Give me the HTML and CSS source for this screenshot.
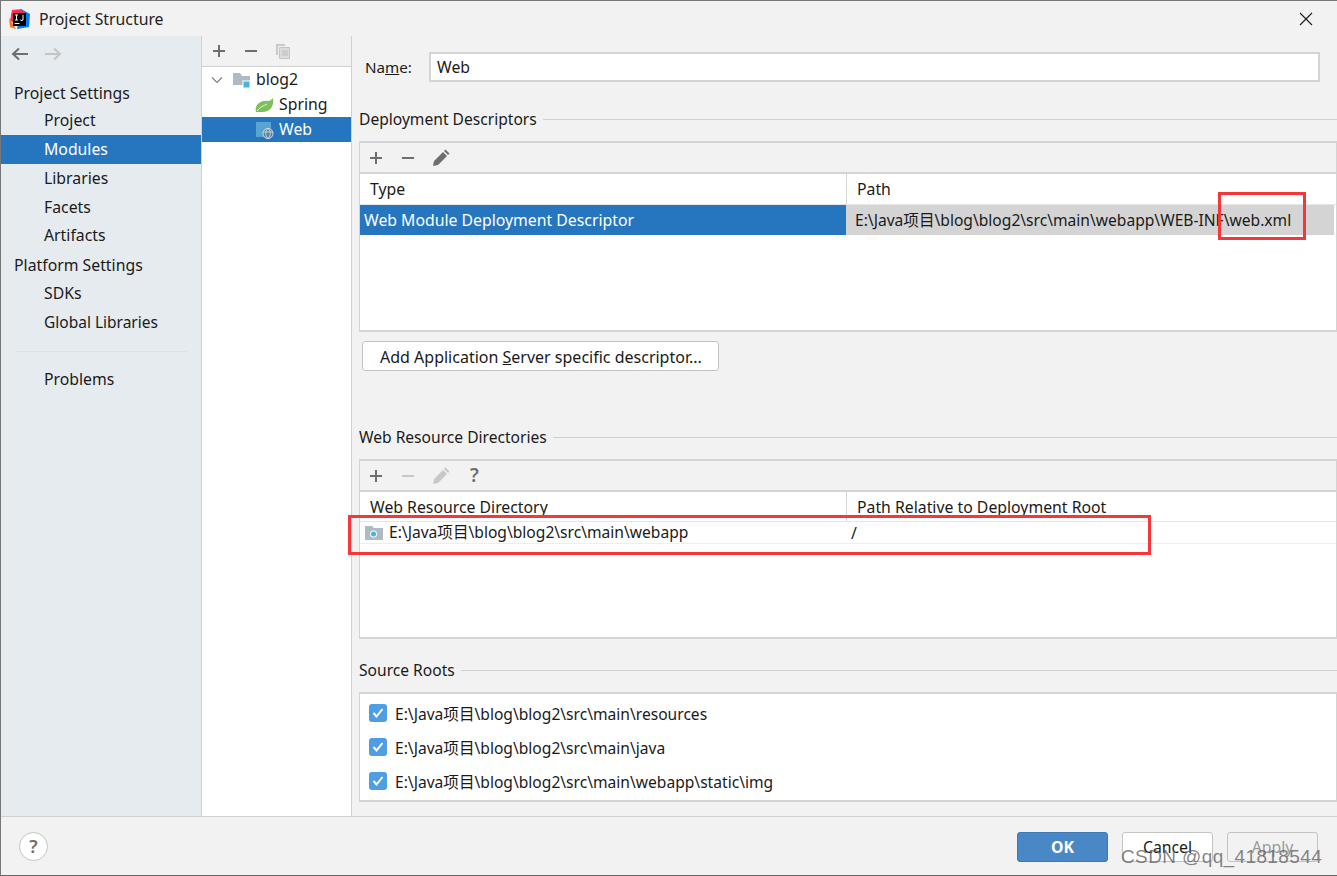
FILE: index.html
```html
<!DOCTYPE html>
<html lang="en">
<head>
<meta charset="utf-8">
<title>Project Structure</title>
<link rel="stylesheet" href="styles.css">
</head>
<body>
<div class="window">
  <header class="titlebar">
    <svg class="app-logo" width="21" height="20" viewBox="0 0 21 20">
      <path d="M3 1 L13 0 L10 10 L1 12Z" fill="#fe315d"/>
      <path d="M0 9 L7 20 L1 18Z" fill="#f97a12"/>
      <path d="M12 0 L21 5 L20 18 L8 20Z" fill="#087cfa"/>
      <path d="M2 5 L8 1 L16 2 L14 9 L7 16 L2 12Z" fill="#fe2857"/>
      <rect x="4" y="4" width="13" height="13" fill="#000"/>
      <rect x="5.500" y="14" width="5" height="1" fill="#fff"/>
      <path d="M6 6h3M7.500 6v5M6 11h3M14 6v4a1.300 1.300 0 0 1-2.600.6" stroke="#fff" stroke-width="1" fill="none"/>
    </svg>
    <span class="title-text">Project Structure</span>
    <svg class="close-x" width="14" height="14" viewBox="0 0 14 14"><path d="M1 1 L13 13 M13 1 L1 13" stroke="#1a1a1a" stroke-width="1.100"/></svg>
  </header>

  <div class="main">
    <nav class="sidebar">
      <div class="nav-arrows">
        <svg width="18" height="14" viewBox="0 0 18 14"><path d="M17 7H2M8 1.500 L2 7 L8 12.500" stroke="#6e6e6e" stroke-width="2" fill="none"/></svg>
        <svg width="18" height="14" viewBox="0 0 18 14"><path d="M1 7H16M10 1.500 L16 7 L10 12.500" stroke="#c4c4c4" stroke-width="2" fill="none"/></svg>
      </div>
      <div class="nav-group nav-group-first">Project Settings</div>
      <div class="nav-item">Project</div>
      <div class="nav-item selected">Modules</div>
      <div class="nav-item">Libraries</div>
      <div class="nav-item nav-item-short">Facets</div>
      <div class="nav-item">Artifacts</div>
      <div class="nav-group nav-group-platform">Platform Settings</div>
      <div class="nav-item">SDKs</div>
      <div class="nav-item nav-item-narrow">Global Libraries</div>
      <div class="nav-sep"></div>
      <div class="nav-item">Problems</div>
    </nav>

    <section class="tree-pane">
      <div class="tree-toolbar">
        <svg class="ic" width="16" height="16" viewBox="0 0 16 16"><path d="M8 2v12M2 8h12" stroke="#6e6e6e" stroke-width="2"/></svg>
        <svg class="ic" width="16" height="16" viewBox="0 0 16 16"><path d="M2 8h12" stroke="#6e6e6e" stroke-width="2"/></svg>
        <svg class="ic" width="16" height="16" viewBox="0 0 16 16"><path d="M1 1h9v2H3v9H1Z" fill="#c9c9c9"/><path d="M4.500 4.500h10v11h-10Z" fill="#dcdcdc" stroke="#c4c4c4"/><path d="M7 8h6M7 10h6M7 12h6" stroke="#bdbdbd"/></svg>
      </div>
      <div class="tree">
        <div class="tree-row">
          <svg class="chev" width="12" height="8" viewBox="0 0 12 8"><path d="M1 1.500 L6 6.500 L11 1.500" stroke="#808080" stroke-width="1.200" fill="none"/></svg>
          <svg class="tree-ic tree-ic-root" width="18" height="18" viewBox="0 0 18 18"><path d="M1 2h7l2 3h8v9H1Z" fill="#b0bac3"/><rect x="11" y="10" width="7" height="7" fill="#40b6e0" stroke="#fff"/></svg>
          <span class="tree-label">blog2</span>
        </div>
        <div class="tree-row tree-child">
          <svg class="tree-ic" width="19" height="16" viewBox="0 0 19 16"><path d="M1 15 C-1 7 7 3 13 4 C15 4 17 2 18 1 C19 7 17 15 7 15 C4 15 3 15 1 15Z" fill="#7cc05a"/><path d="M2 14 C5 10 8 9 12 7" stroke="#fff" stroke-width=".8" fill="none"/></svg>
          <span class="tree-label">Spring</span>
        </div>
        <div class="tree-row tree-child selected">
          <svg class="tree-ic" width="19" height="18" viewBox="0 0 19 18"><rect x="1" y="1" width="15" height="15" fill="#5aa5cf"/><circle cx="13" cy="12.500" r="5" fill="#5f7f99" stroke="#d8e2ea"/><path d="M8.500 11h9M13 7.500c-3 3-3 7 0 10M13 7.500c3 3 3 7 0 10" stroke="#d8e2ea" stroke-width=".8" fill="none"/></svg>
          <span class="tree-label">Web</span>
        </div>
      </div>
    </section>

    <section class="content">
      <div class="name-row">
        <label class="name-label">Na<u>m</u>e:</label>
        <div class="name-input">Web</div>
      </div>

      <div class="sec-title sec-deploy"><span>Deployment Descriptors</span></div>
      <div class="panel panel-deploy">
        <div class="toolbar">
          <svg class="ic" width="16" height="16" viewBox="0 0 16 16"><path d="M8 2v12M2 8h12" stroke="#6e6e6e" stroke-width="2"/></svg>
          <svg class="ic" width="16" height="16" viewBox="0 0 16 16"><path d="M2 8h12" stroke="#6e6e6e" stroke-width="2"/></svg>
          <svg class="ic" width="18" height="18" viewBox="0 0 18 18"><path d="M1 17 L2 12 L11 3 L15 7 L6 16Z M12 2 L13.500 .5 L17.500 4.500 L16 6Z" fill="#6e6e6e"/></svg>
        </div>
        <div class="thead">
          <div class="col1 th1">Type</div>
          <div class="col2 th2">Path</div>
        </div>
        <div class="tr tr-deploy">
          <div class="col1 cell-sel">Web Module Deployment Descriptor</div>
          <div class="col2 cell-grey">E:\Java项目\blog\blog2\src\main\webapp\WEB-INF\web.xml</div>
        </div>
      </div>

      <div class="add-btn">Add Application <u>S</u>erver specific descriptor...</div>

      <div class="sec-title sec-web"><span>Web Resource Directories</span></div>
      <div class="panel panel-web">
        <div class="toolbar">
          <svg class="ic" width="16" height="16" viewBox="0 0 16 16"><path d="M8 2v12M2 8h12" stroke="#6e6e6e" stroke-width="2"/></svg>
          <svg class="ic" width="16" height="16" viewBox="0 0 16 16"><path d="M2 8h12" stroke="#c8c8c8" stroke-width="2"/></svg>
          <svg class="ic" width="18" height="18" viewBox="0 0 18 18"><path d="M1 17 L2 12 L11 3 L15 7 L6 16Z M12 2 L13.500 .5 L17.500 4.500 L16 6Z" fill="#c8c8c8"/></svg>
          <span class="tb-q">?</span>
        </div>
        <div class="thead thead-web">
          <div class="col1 th1">Web Resource Directory</div>
          <div class="col2 th2">Path Relative to Deployment Root</div>
        </div>
        <div class="tr tr-web">
          <div class="col1 cell-dir">
            <svg width="18" height="15" viewBox="0 0 18 15"><path d="M0 1h7l2 2h9v12H0Z" fill="#afbac3"/><circle cx="8.500" cy="9" r="3.500" fill="#fff"/><circle cx="8.500" cy="9" r="2.500" fill="#40b6e0"/></svg>
            <span class="dir-label">E:\Java项目\blog\blog2\src\main\webapp</span>
          </div>
          <div class="col2 cell-root">/</div>
        </div>
      </div>

      <div class="sec-title sec-src"><span>Source Roots</span></div>
      <div class="panel panel-src">
        <div class="src-row"><span class="check"><svg width="12" height="10" viewBox="0 0 12 10"><path d="M1.500 5 L4.500 8.500 L10.500 1" stroke="#fff" stroke-width="2" fill="none"/></svg></span>E:\Java项目\blog\blog2\src\main\resources</div>
        <div class="src-row"><span class="check"><svg width="12" height="10" viewBox="0 0 12 10"><path d="M1.500 5 L4.500 8.500 L10.500 1" stroke="#fff" stroke-width="2" fill="none"/></svg></span>E:\Java项目\blog\blog2\src\main\java</div>
        <div class="src-row"><span class="check"><svg width="12" height="10" viewBox="0 0 12 10"><path d="M1.500 5 L4.500 8.500 L10.500 1" stroke="#fff" stroke-width="2" fill="none"/></svg></span>E:\Java项目\blog\blog2\src\main\webapp\static\img</div>
      </div>
    </section>
  </div>

  <footer class="footer">
    <div class="help">?</div>
    <div class="btn btn-ok">OK</div>
    <div class="btn btn-cancel">Cancel</div>
    <div class="btn btn-apply">Apply</div>
  </footer>

  <div class="mark mark-xml"></div>
  <div class="mark mark-dir"></div>
  <div class="watermark">CSDN @qq_41818544</div>
</div>
</body>
</html>
```
FILE: styles.css
```css
* { box-sizing: border-box; }
html, body { margin: 0; padding: 0; }
body {
  width: 1337px;
  height: 876px;
  overflow: hidden;
  font-family: "Noto Sans", "Noto Sans CJK SC", sans-serif;
  font-size: 15.8px;
  color: #1a1a1a;
  background: #f2f2f2;
}
.window {
  position: relative;
  width: 1337px;
  height: 876px;
  display: flex;
  flex-direction: column;
  background: #f2f2f2;
  border-top: 1px solid #777;
  border-left: 1px solid #777;
  border-bottom: 1px solid #666;
}
.titlebar {
  height: 35px;
  flex: none;
  display: flex;
  align-items: center;
  padding-left: 8px;
  padding-right: 24px;
}
.app-logo { margin-right: 9px; }
.title-text { flex: 1; color: #222; }
.main { flex: 1; display: flex; min-height: 0; }

.sidebar {
  width: 200px;
  flex: none;
  background: #e6ebf0;
  display: flex;
  flex-direction: column;
}
.nav-arrows { height: 34px; display: flex; align-items: center; gap: 15px; padding: 1px 0 0 10px; flex: none; }
.nav-group { height: 29px; line-height: 29px; padding-left: 13px; flex: none; }
.nav-group-first { height: 24px; line-height: 22px; margin-top: 12px; }
.nav-group-platform { line-height: 31px; }
.nav-item { height: 29px; line-height: 28px; padding-left: 43px; flex: none; }
.nav-item-short { height: 28px; }
.nav-item-narrow { font-size: 15.5px; }
.nav-item.selected { background: #2675bf; color: #fff; }
.nav-sep { height: 1px; margin: 14px 14px 13px 14px; background: #dde2e7; flex: none; }

.tree-pane {
  width: 151px;
  flex: none;
  display: flex;
  flex-direction: column;
  border-left: 1px solid #d1d1d1;
  border-right: 1px solid #d1d1d1;
}
.tree-toolbar { height: 31px; display: flex; align-items: center; gap: 16px; padding-left: 9px; flex: none; border-bottom: 1px solid #d1d1d1; }
.tree { flex: 1; background: #fff; }
.tree-row { height: 25px; display: flex; align-items: center; padding-left: 9px; color: #1a1a1a; }
.tree-label { line-height: 24px; height: 25px; }
.tree-row .chev { margin-right: 9px; }
.tree-row .tree-ic { margin-right: 5px; flex: none; }
.tree-row .tree-ic-root { margin-right: 6px; }
.tree-child { padding-left: 53px; }
.tree-row.selected { background: #2675bf; color: #fff; }

.content { flex: 1; padding-left: 7px; min-width: 0; }
.name-row { display: flex; align-items: center; height: 30px; margin-top: 16px; padding-left: 6px; }
.name-label { width: 64px; flex: none; font-size: 15.2px; }
.name-input {
  width: 891px;
  height: 30px;
  line-height: 27px;
  padding-left: 6px;
  background: #fff;
  border: 2px solid #d4d4d4;
}
.sec-title { display: flex; align-items: center; height: 22px; font-size: 15.6px; }
.sec-title::after { content: ""; flex: 1; height: 1px; background: #d1d1d1; margin-left: 6px; }
.sec-deploy { margin-top: 26px; }
.sec-web { margin-top: 55px; }
.sec-src { margin-top: 20px; }
.panel { border: 2px solid #d4d4d4; border-left-width: 1px; border-right-width: 1px; width: 978px; background: #fff; }
.panel-deploy { height: 191px; margin-top: 11px; }
.panel-web { height: 180px; margin-top: 11px; }
.panel-src { height: 110px; margin-top: 11px; padding-top: 2px; }
.toolbar { height: 29px; background: #f2f2f2; display: flex; align-items: center; gap: 16px; padding-left: 8px; border-bottom: 2px solid #d4d4d4; box-sizing: content-box; }
.tb-q { font-size: 19px; font-weight: 600; color: #6e6e6e; line-height: 1; margin-left: 4px; }
.thead { display: flex; height: 31px; border-bottom: 1px solid #e6e6e6; }
.thead-web { height: 30px; }
.th1 { padding-left: 10px; line-height: 30px; }
.th2 { padding-left: 10px; line-height: 30px; border-left: 1px solid #d4d4d4; }
.col1 { width: 486px; flex: none; }
.col2 { flex: 1; }
.tr { display: flex; }
.tr-deploy { height: 30px; line-height: 30px; }
.cell-sel { background: #2675bf; color: #fff; padding-left: 4px; }
.cell-grey { background: #d4d4d4; padding-left: 9px; margin-right: 2px; font-size: 15.6px; white-space: nowrap; }
.tr-web { height: 22px; line-height: 23px; border-bottom: 1px solid #eeeeee; }
.cell-dir { display: flex; align-items: center; gap: 6px; padding-left: 5px; font-size: 15.6px; }
.cell-root { padding-left: 5px; }
.add-btn {
  width: 357px;
  height: 30px;
  margin: 9px 0 0 3px;
  line-height: 30px;
  padding-left: 17px;
  background: #fff;
  border: 1px solid #c4c4c4;
  border-radius: 3px;
  font-size: 16px;
}
.src-row { height: 34px; display: flex; align-items: center; padding-left: 9px; font-size: 15.6px; }
.check {
  width: 18px;
  height: 18px;
  background: #4f9ee3;
  border-radius: 3px;
  display: flex;
  align-items: center;
  justify-content: center;
  margin-right: 8px;
  flex: none;
}

.footer {
  height: 59px;
  flex: none;
  display: flex;
  align-items: center;
  border-top: 1px solid #d1d1d1;
  padding: 0 19px 0 18px;
  gap: 14px;
}
.help {
  width: 29px;
  height: 29px;
  border: 1px solid #c4c4c4;
  border-radius: 50%;
  background: #fff;
  text-align: center;
  line-height: 26px;
  font-size: 18px;
  font-weight: 600;
  color: #6e6e6e;
  margin-right: auto;
}
.btn {
  width: 91px;
  height: 30px;
  line-height: 28px;
  text-align: center;
  border-radius: 3px;
  border: 1px solid #c4c4c4;
  margin-top: 2px;
}
.btn-ok { background: #4a87c7; border-color: #3f78b3; color: #fff; font-weight: 700; }
.btn-cancel { background: #fff; }
.btn-apply { background: #f2f2f2; color: #9a9a9a; }

.mark { position: absolute; border: 3px solid #f5363a; }
.mark-xml { left: 1217px; top: 191px; width: 88px; height: 48px; }
.mark-dir { left: 347px; top: 514px; width: 803px; height: 40px; }
.watermark {
  position: absolute;
  left: 1120px;
  top: 845px;
  font-family: "Liberation Sans", sans-serif;
  font-size: 19px;
  letter-spacing: .38px;
  color: rgba(90, 90, 90, .75);
  white-space: nowrap;
}
```
